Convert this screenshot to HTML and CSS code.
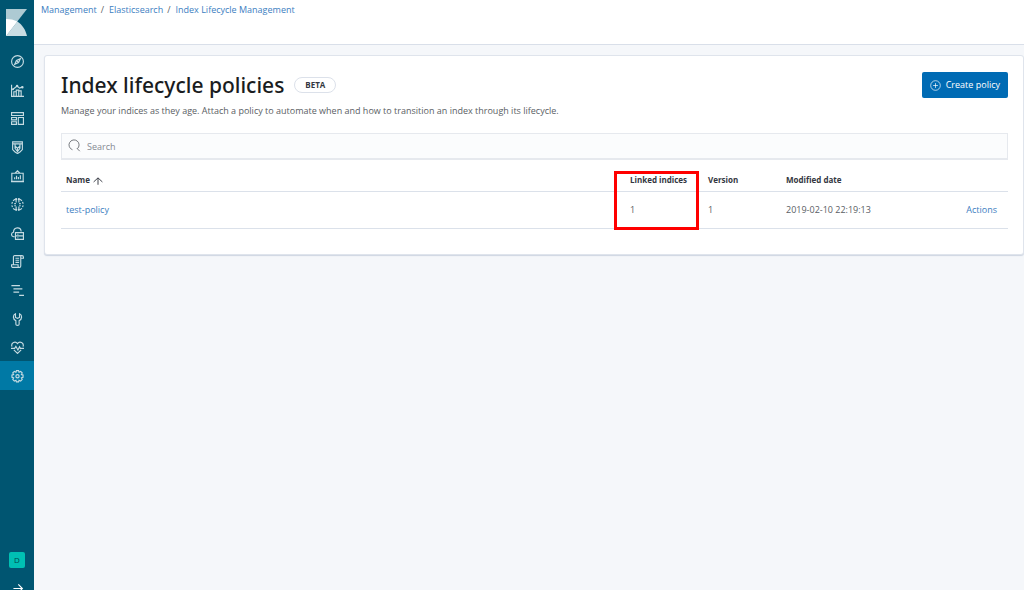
FILE: index.html
```html
<!DOCTYPE html>
<html lang="en">
<head>
    <meta charset="UTF-8">
    <meta name="viewport" content="width=device-width, initial-scale=1.0">
    <title>Index Lifecycle Management</title>
    <link rel="stylesheet" href="styles.css">
</head>
<body>
    <aside class="sidebar">
        <a class="logo" href="#" aria-label="Home">
            <svg viewBox="0 0 21 27">
                <path fill="#adcad3" d="M0 0h21L0 27z"/>
                <path fill="#c9dde3" d="M11.300 12.500C16 15.500 19.500 20.500 21 27H0z"/>
                <path fill="#fff" d="M0 10c4.300 0 8 .8 11.300 2.500L0 27z"/>
            </svg>
        </a>
        <nav class="nav">
            <a class="nav-item" href="#" aria-label="Discover">
                <svg class="icon" viewBox="0 0 16 16"><circle cx="8" cy="8" r="7.300"/><path d="M11.500 4.500L9.300 9.300 4.500 11.500 6.700 6.700z"/><circle cx="8" cy="8" r=".6"/></svg>
            </a>
            <a class="nav-item" href="#" aria-label="Visualize">
                <svg class="icon" viewBox="0 0 16 16"><path d="M.7 1v14.300H16M3.500 15V9.500H6M6.500 15V7.500h3V15M12.500 15V8.500H10M2.500 6.500l5-4 3 2.500 4-1.500"/><circle cx="2.500" cy="6.500" r=".6"/><circle cx="7.500" cy="2.500" r=".8"/><circle cx="14" cy="4" r=".8"/></svg>
            </a>
            <a class="nav-item" href="#" aria-label="Dashboard">
                <svg class="icon" viewBox="0 0 16 16"><path d="M.7.700h14.600v3.600H.7zM.7 6.700h6v3H.7zM.7 12h6v3.300h-6zM9 6.700h6.300v8.600H9z"/></svg>
            </a>
            <a class="nav-item" href="#" aria-label="Timelion">
                <svg class="icon" viewBox="0 0 16 16"><path d="M2 1h12v9.500l-3 3-3 2-3-2-3-3zM2 3.500h12M5 4v5l3 4 3-4V4M5 6l3 3 3-3M8 9v4"/></svg>
            </a>
            <a class="nav-item" href="#" aria-label="Canvas">
                <svg class="icon" viewBox="0 0 16 16"><path d="M1 4h14v10H1zM0 14.300h16M5 4l3-3 3 3M4.500 11.500V9M6.800 11.500V7M9.100 11.500V8.500M11.500 11.500V6.500"/></svg>
            </a>
            <a class="nav-item" href="#" aria-label="Machine Learning">
                <svg class="icon" viewBox="0 0 16 16"><path d="M4.800 1.500L2.500 3.500M11.200 1.500l2.300 2M1.800 4.800L1 7M14.200 4.800L15 7M1 9l.8 2.300M15 9l-.8 2.300M2.500 12.800l2.300 1.700M13.500 12.800l-2.300 1.700M6.300 2v3.500M9.700 2v3.500M6.300 14v-3.500M9.700 14v-3.500M4 7h2M10 7h2M4 9.500h2M10 9.500h2"/><circle cx="6.300" cy="1.500" r=".7"/><circle cx="9.700" cy="1.500" r=".7"/><circle cx="6.300" cy="14.500" r=".7"/><circle cx="9.700" cy="14.500" r=".7"/></svg>
            </a>
            <a class="nav-item" href="#" aria-label="Infrastructure">
                <svg class="icon" viewBox="0 0 16 16"><path d="M4.500 12H3.300C-.3 11.500 0 7 3 6.500 3.500-.5 12-.5 12.500 5.500M5.500 7h9.800v8.300H5.500zM5.500 11h9.800M8 9h1M8 13.200h1"/></svg>
            </a>
            <a class="nav-item" href="#" aria-label="Logs">
                <svg class="icon" viewBox="0 0 16 16"><path d="M3 12V2.500C3 1.500 3.500.7 4.500.7h9c1 0 1.800.8 1.800 2V4H12M12 4V2.500C12 1.500 12.500.7 13.500.7M12 4v9.500c0 1-.7 1.800-1.700 1.800H2.500c-1 0-1.800-.8-1.800-1.800V12h8v1.500c0 1 .6 1.800 1.600 1.800M5.500 4H10M5.500 6.500H10M5.500 9H10"/></svg>
            </a>
            <a class="nav-item" href="#" aria-label="APM">
                <svg class="icon" viewBox="0 0 16 16"><path d="M.5 2H11M3 6h11M3 10h7M10 14h6"/></svg>
            </a>
            <a class="nav-item" href="#" aria-label="Dev Tools">
                <svg class="icon" viewBox="0 0 16 16"><path d="M5.500 1C2 2.500 2 7.500 6 9.500v4.300c0 2 4 2 4 0V9.500c4-2 4-7 .5-8.500v4.500L8 6.500 5.500 5.500z"/></svg>
            </a>
            <a class="nav-item" href="#" aria-label="Monitoring">
                <svg class="icon" viewBox="0 0 16 16"><path d="M1.200 7C-.5 2 5.500-.5 8 3.200 10.500-.5 16.500 2 14.800 7M0 9h4.500L6 6.500 8.500 11l2-4 1 2H16M3.500 11L8 15.300l4.500-4.300"/></svg>
            </a>
            <a class="nav-item active" href="#" aria-label="Management">
                <svg class="icon" viewBox="0 0 16 16"><path d="M6.700.7h2.600l.6 2 2-1 1.900 1.900-1 2 2 .6v2.900l-2 .6 1 2-1.900 1.900-2-1-.6 2H6.700l-.6-2-2 1-1.900-1.900 1-2-2-.6V6.200l2-.6-1-2 1.900-1.900 2 1z"/><circle cx="8" cy="7.700" r="2"/></svg>
            </a>
        </nav>
        <div class="sidebar-footer">
            <a class="space" href="#">D</a>
            <button class="expand" type="button" aria-label="Expand">
                <svg class="icon" viewBox="0 0 16 16"><path d="M3 8h11M9 3l5 5-5 5"/></svg>
            </button>
        </div>
    </aside>

    <div class="main">
        <header class="header">
            <a href="#">Management</a><span class="slash">/</span><a href="#">Elasticsearch</a><span class="slash">/</span><a href="#">Index Lifecycle Management</a>
        </header>
        <main class="content">
            <section class="panel">
                <div class="title-row">
                    <h1>Index lifecycle policies</h1>
                    <span class="badge">BETA</span>
                    <button class="create" type="button">
                        <svg viewBox="0 0 16 16"><circle cx="8" cy="8" r="7"/><path d="M8 4.500v7M4.500 8h7"/></svg>
                        Create policy
                    </button>
                </div>
                <p class="description">Manage your indices as they age. Attach a policy to automate when and how to transition an index through its lifecycle.</p>
                <div class="search">
                    <svg viewBox="0 0 16 16"><path d="M5.500 13.200A6.200 6.200 0 1 1 11.500 12M11 11.500l3.500 3.500"/></svg>
                    <input type="search" placeholder="Search" aria-label="Search">
                </div>
                <table class="policies">
                    <thead>
                        <tr>
                            <th>Name <svg viewBox="0 0 16 16"><path d="M8 14V3M1 9.500L8 3l7 6.500"/></svg></th>
                            <th class="col-linked">Linked indices<span class="highlight"></span></th>
                            <th class="col-version">Version</th>
                            <th class="col-date">Modified date</th>
                            <th class="col-actions"></th>
                        </tr>
                    </thead>
                    <tbody>
                        <tr>
                            <td><a href="#">test-policy</a></td>
                            <td>1</td>
                            <td>1</td>
                            <td>2019-02-10 22:19:13</td>
                            <td class="col-actions"><a href="#">Actions</a></td>
                        </tr>
                    </tbody>
                </table>
            </section>
        </main>
    </div>
</body>
</html>
```
FILE: styles.css
```css
* {
    box-sizing: border-box;
}
body {
    display: flex;
    min-height: 100vh;
    margin: 0;
    background-color: #f5f7fa;
    color: #5a5e64;
    font-family: "Open Sans", "Liberation Sans", sans-serif;
    font-size: 9px;
    line-height: 14px;
}
a {
    color: #3c7ebf;
    text-decoration: none;
}
svg {
    fill: none;
    stroke: currentColor;
}
.sidebar {
    display: flex;
    flex-direction: column;
    flex: none;
    width: 34px;
    height: 100vh;
    overflow: hidden;
    background-color: #005571;
}
.logo {
    padding: 9px 7px 0 6px;
    height: 47px;
}
.logo svg {
    display: block;
    width: 21px;
    height: 27px;
    stroke: none;
}
.nav {
    display: grid;
    grid-template-rows: repeat(12, 1fr);
    height: 343px;
}
.nav-item {
    display: flex;
    align-items: center;
    justify-content: center;
    padding: 1px 0 0 1px;
    color: #c5dbe2;
}
.nav-item.active {
    background-color: #0079a5;
}
.icon {
    width: 13px;
    height: 13px;
    stroke-width: 1.4;
}
.sidebar-footer {
    display: flex;
    flex-direction: column;
    align-items: center;
    gap: 14px;
    height: 38px;
    margin-top: auto;
}
.space {
    flex: none;
    width: 16px;
    height: 16px;
    border-radius: 2px;
    background-color: #00bfb3;
    color: #00474f;
    font-size: 8px;
    line-height: 16px;
    text-align: center;
}
.expand {
    flex: none;
    padding: 0;
    border: none;
    background: none;
    color: #fff;
    line-height: 0;
}
.main {
    flex: 1;
    min-width: 0;
}
.header {
    height: 45px;
    padding: 3px 7px;
    border-bottom: 1px solid #d9dfe9;
    background-color: #fff;
}
.slash {
    margin: 0 5px 0 4px;
}
.content {
    padding: 10px 0 0 10px;
}
.panel {
    padding: 16px 15px 25px 16px;
    border: 1px solid #dfe4ec;
    border-radius: 3px;
    background-color: #fff;
    box-shadow: 0 1px 1px rgba(150, 165, 190, 0.4);
}
.title-row {
    display: flex;
    align-items: center;
}
h1 {
    margin: 0;
    color: #1a1c21;
    font-family: "Noto Sans", "Open Sans", sans-serif;
    font-size: 21px;
    font-weight: 500;
    line-height: 26px;
}
.badge {
    margin-left: 10px;
    padding: 0 10px;
    border: 1px solid #dce1ea;
    border-radius: 8px;
    color: #343741;
    font-size: 8px;
    font-weight: 700;
}
.create {
    display: flex;
    align-items: center;
    gap: 5px;
    height: 26px;
    margin-left: auto;
    padding: 0 8px;
    border: none;
    border-radius: 2px;
    background-color: #006bb4;
    color: #fff;
    font: inherit;
}
.create svg {
    width: 11px;
    height: 11px;
}
.description {
    margin: 6px 0 15px;
}
.search {
    position: relative;
}
.search svg {
    position: absolute;
    top: 6px;
    left: 7px;
    width: 13px;
    height: 13px;
}
.search input {
    display: block;
    width: 100%;
    height: 27px;
    padding: 0 8px 0 25px;
    border: 1px solid #e6e9ee;
    border-bottom-width: 2px;
    border-radius: 0;
    background-color: #fbfcfd;
    font: inherit;
    appearance: none;
}
.search input::placeholder {
    color: #858a93;
}
.policies {
    width: 100%;
    margin-top: 9px;
    border-collapse: separate;
    border-spacing: 0;
    table-layout: fixed;
}
.policies th,
.policies td {
    padding: 0 5px;
    border-bottom: 1px solid #dbe1ea;
    text-align: left;
}
.policies th {
    position: relative;
    height: 23px;
    color: #343741;
    font-size: 8px;
    font-weight: 700;
}
.policies th svg {
    width: 10px;
    height: 10px;
    margin-left: 1px;
    stroke-width: 1.5;
    vertical-align: middle;
}
.policies td {
    height: 37px;
}
.policies .col-linked,
.policies .col-version {
    width: 78px;
}
.policies .col-date {
    width: 155px;
}
.policies .col-actions {
    width: 72px;
    padding-right: 11px;
    text-align: right;
}
.highlight {
    position: absolute;
    top: 2px;
    left: -11px;
    right: 4px;
    height: 59px;
    border: 3px solid #f00;
}
```
